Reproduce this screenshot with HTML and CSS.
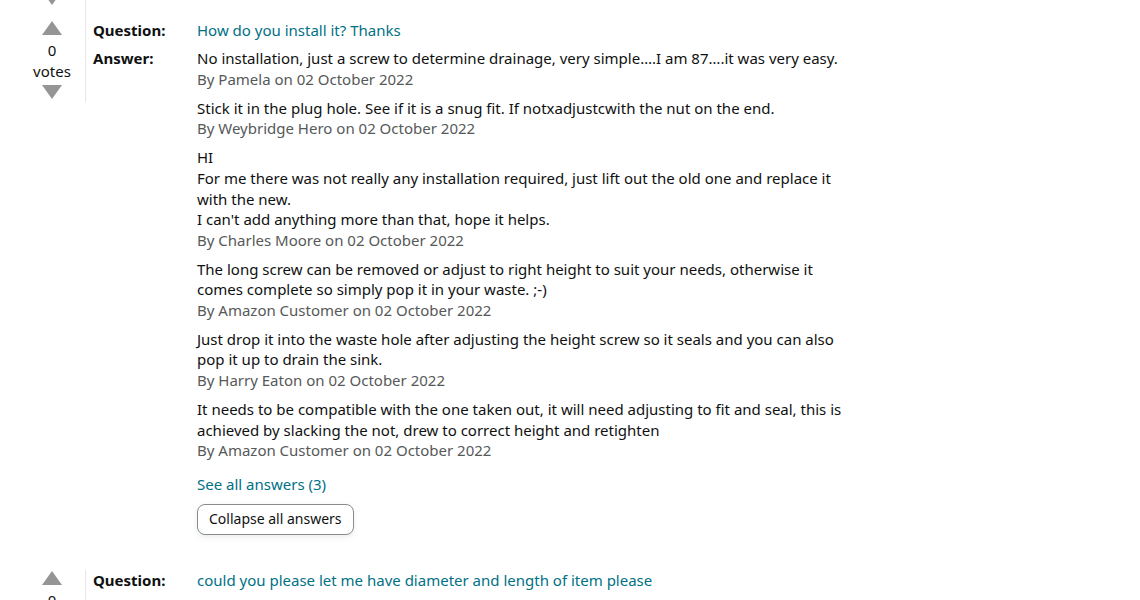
FILE: index.html
```html
<!DOCTYPE html>
<html>
<head>
<meta charset="utf-8">
<link rel="stylesheet" href="styles.css">
</head>
<body>
<div class="qa qa-prev">
  <div class="vote"><span class="arrow down"></span></div>
  <div class="main"></div>
</div>
<div class="qa qa-cur">
  <div class="vote">
    <span class="arrow up"></span>
    <span class="count">0</span>
    <span class="votes">votes</span>
    <span class="arrow down"></span>
  </div>
  <div class="main">
    <div class="row q">
      <div class="label">Question:</div>
      <div class="content"><a class="link">How do you install it? Thanks</a></div>
    </div>
    <div class="row a">
      <div class="label">Answer:</div>
      <div class="content">
        <div class="answer">
          <div class="text">No installation, just a screw to determine drainage, very simple….I am 87….it was very easy.</div>
          <div class="by">By Pamela on 02 October 2022</div>
        </div>
        <div class="answer">
          <div class="text">Stick it in the plug hole. See if it is a snug fit. If notxadjustcwith the nut on the end.</div>
          <div class="by">By Weybridge Hero on 02 October 2022</div>
        </div>
        <div class="answer">
          <div class="text">HI<br>For me there was not really any installation required, just lift out the old one and replace it with the new.<br>I can't add anything more than that, hope it helps.</div>
          <div class="by">By Charles Moore on 02 October 2022</div>
        </div>
        <div class="answer">
          <div class="text">The long screw can be removed or adjust to right height to suit your needs, otherwise it comes complete so simply pop it in your waste. ;-)</div>
          <div class="by">By Amazon Customer on 02 October 2022</div>
        </div>
        <div class="answer">
          <div class="text">Just drop it into the waste hole after adjusting the height screw so it seals and you can also pop it up to drain the sink.</div>
          <div class="by">By Harry Eaton on 02 October 2022</div>
        </div>
        <div class="answer">
          <div class="text">It needs to be compatible with the one taken out, it will need adjusting to fit and seal, this is achieved by slacking the not, drew to correct height and retighten</div>
          <div class="by">By Amazon Customer on 02 October 2022</div>
        </div>
        <a class="link see-all">See all answers (3)</a>
        <button class="collapse">Collapse all answers</button>
      </div>
    </div>
  </div>
</div>
<div class="qa qa-next">
  <div class="vote">
    <span class="arrow up"></span>
    <span class="count">0</span>
  </div>
  <div class="main">
    <div class="row q">
      <div class="label">Question:</div>
      <div class="content"><a class="link">could you please let me have diameter and length of item please</a></div>
    </div>
  </div>
</div>
</body>
</html>
```
FILE: styles.css
```css
html, body { margin: 0; padding: 0; background: #fff; }
body {
  font-family: "Noto Sans", "Open Sans", Arial, sans-serif;
  font-size: 15px;
  line-height: 20.7px;
  color: #0f1111;
  height: 600px;
  overflow: hidden;
}
.qa { display: flex; padding-left: 19px; align-items: flex-start; }
.vote {
  width: 67px;
  flex: none;
  display: flex;
  flex-direction: column;
  align-items: center;
  border-right: 1px solid #e7e7e7;
  box-sizing: border-box;
}
.qa-prev { height: 20px; }
.qa-prev .vote { height: 20px; }
.qa-prev .arrow.down { margin-top: -9px; }
.qa-cur .vote { height: 82px; }
.count { margin-top: 5px; }
.arrow { width: 0; height: 0; border-left: 10px solid transparent; border-right: 10px solid transparent; display: block; flex: none; }
.arrow.up { border-bottom: 14px solid #959595; margin-top: 1px; }
.arrow.down { border-top: 14px solid #959595; margin-top: 4px; }
.main { padding-left: 7px; }
.row { display: flex; }
.label { width: 104px; flex: none; font-weight: 700; }
.content { width: 660px; }
.row.q { margin-bottom: 7.6px; }
.link { color: #007185; text-decoration: none; }
.answer { margin-bottom: 8px; }
.by { color: #565959; }
.see-all { display: block; margin-top: 13.5px; }
.collapse {
  display: block;
  margin-top: 8.7px;
  font: inherit;
  font-size: 14px;
  line-height: 20px;
  color: #0f1111;
  background: #fff;
  border: 1px solid #888c8c;
  border-radius: 8px;
  height: 31px;
  padding: 0 11px;
  box-shadow: 0 2px 5px rgba(213,217,217,.5);
}
.qa-next { margin-top: 35px; }
.qa-next .vote { height: 40px; }
```
